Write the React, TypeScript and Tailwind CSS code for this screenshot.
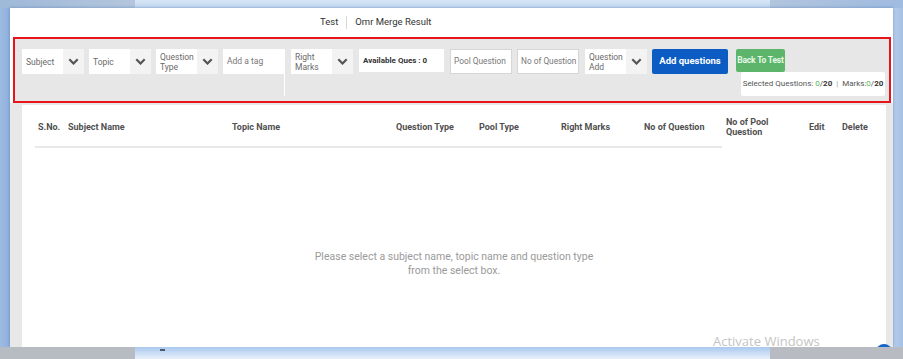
import React from "react";

function Chevron() {
  return (
    <svg width="11" height="7" viewBox="0 0 11 7">
      <path d="M1.3 1.3 L5.5 5.5 L9.7 1.3" fill="none" stroke="#555" strokeWidth="2.2" />
    </svg>
  );
}

function Select({ label }: { label: React.ReactNode }) {
  return (
    <div className="flex h-[25px] w-[62px] bg-white">
      <div className="flex flex-1 items-center pl-[4px] text-[8.5px] leading-[10px] text-[#6a6a6a]">{label}</div>
      <div className="flex w-[21px] items-center justify-center bg-[#f3f3f3]">
        <Chevron />
      </div>
    </div>
  );
}

function TextBox({ placeholder }: { placeholder: string }) {
  return (
    <div className="flex h-[25px] w-[62px] items-center whitespace-nowrap border border-[#d6d6d6] bg-white pl-[3px] text-[8.3px] text-[#777]">
      {placeholder}
    </div>
  );
}

const headers = [
  "S.No.",
  "Subject Name",
  "Topic Name",
  "Question Type",
  "Pool Type",
  "Right Marks",
  "No of Question",
  "No of Pool Question",
  "Edit",
  "Delete",
];

export default function App() {
  return (
    <div className="flex h-[359px] w-[903px] flex-col overflow-hidden bg-[#a6c1e3] font-['Roboto',sans-serif]">
      <div className="flex h-[8px]">
        <div className="w-[135px] bg-gradient-to-r from-[#9fb9d9] to-[#b4c6dc]" />
        <div className="flex-1 bg-gradient-to-b from-[#d6e5f5] to-[#c3d8f0]" />
        <div className="w-[133px] bg-gradient-to-r from-[#b1c5dd] to-[#9fbbe0]" />
      </div>
      <div className="flex h-[339px]">
        <div className="w-[10px] bg-gradient-to-r from-[#9dbbe2] to-[#8fb1de]" />
        <div className="relative flex w-[883px] flex-col bg-white shadow-[0_0_3px_rgba(70,110,170,0.6)]">
          <div className="flex h-[29px] items-center pl-[310px] text-[9.5px] text-[#333]">
            <span>Test</span>
            <span className="mx-[8px] h-[13px] w-px bg-[#d8d8d8]" />
            <span>Omr Merge Result</span>
          </div>
          <div className="ml-[3px] mr-[2px] flex h-[66px] gap-[5px] border-2 border-[#e8141b] bg-[#e7e7e7] pl-[7px] pt-[10px]">
            <Select label="Subject" />
            <Select label="Topic" />
            <Select label={<>Question<br />Type</>} />
            <div className="flex flex-col items-end">
              <div className="flex h-[25px] w-[62px] items-center bg-white pl-[4px] text-[8.5px] text-[#777]">Add a tag</div>
              <div className="h-[22px] w-px bg-white" />
            </div>
            <div className="ml-px">
              <Select label={<>Right<br />Marks</>} />
            </div>
            <div className="ml-px flex h-[23px] w-[85px] items-center bg-white pl-[4px] text-[8px] font-bold text-[#333]">
              Available Ques : 0
            </div>
            <div className="ml-px">
              <TextBox placeholder="Pool Question" />
            </div>
            <TextBox placeholder="No of Question" />
            <div className="ml-px">
              <Select label={<>Question<br />Add</>} />
            </div>
            <div className="flex h-[25px] w-[76px] items-center justify-center rounded-[2px] bg-[#0c5cc4] text-[9.5px] font-bold text-white">
              Add questions
            </div>
            <div className="ml-[3px] flex flex-col">
              <div className="flex h-[23px] w-[49px] items-center justify-center rounded-[2px] bg-[#5cb56b] text-[8.5px] font-bold tracking-[-0.2px] text-[#e6f8e6]">
                Back To Test
              </div>
              <div className="ml-[5px] flex h-[24px] w-[144px] items-center justify-center rounded-[2px] bg-white text-[8px] text-[#555]">
                Selected Questions:&nbsp;<span className="text-[#5cb85c]">0</span>/<b className="text-[#333]">20</b>
                <span className="mx-[4px] text-[#999]">|</span>
                Marks:<span className="text-[#5cb85c]">0</span>/<b className="text-[#333]">20</b>
              </div>
            </div>
          </div>
          <div className="flex flex-1 bg-[#e8e8e8] pt-[2px]">
            <div className="ml-[12px] mr-[7px] flex flex-1 flex-col bg-white pl-[13px] pt-[3px]">
              <div className="grid h-[38px] grid-cols-[30px_164px_164px_83px_82px_83px_82px_83px_33px_1fr] items-center text-[9px] font-bold leading-[10px] text-[#505050]">
                {headers.map((h) => (
                  <div key={h} className={h === "No of Pool Question" ? "w-[60px] pl-[3px]" : "pl-[3px]"}>
                    {h}
                  </div>
                ))}
              </div>
              <div className="h-[2px] w-[687px] bg-[#e9e9e9]" />
              <div className="mt-[102px] flex flex-col items-center pr-[13px] text-[10.5px] leading-[14px] text-[#9a9a9a]">
                <span>Please select a subject name, topic name and question type</span>
                <span>from the select box.</span>
              </div>
            </div>
          </div>
          <div className="absolute left-[703px] top-[324px] font-['Open_Sans',sans-serif] text-[13px] text-[#c4c4c4]">
            Activate Windows
          </div>
          <div className="absolute left-[866px] top-[336px] h-[16px] w-[16px] rounded-full bg-[#1565c8]" />
        </div>
        <div className="w-[10px] bg-gradient-to-r from-[#b9cfea] to-[#a3c0e4]" />
      </div>
      <div className="relative flex h-[12px]">
        <div className="w-[135px] bg-[#b7bcc3]" />
        <div className="flex-1 bg-gradient-to-b from-[#a9c8ee] to-[#e9f1fa]" />
        <div className="w-[133px] bg-[#b8bcc2]" />
        <div className="absolute left-[160px] top-[2px] h-[2px] w-[5px] bg-[#4a5a70]" />
      </div>
    </div>
  );
}
